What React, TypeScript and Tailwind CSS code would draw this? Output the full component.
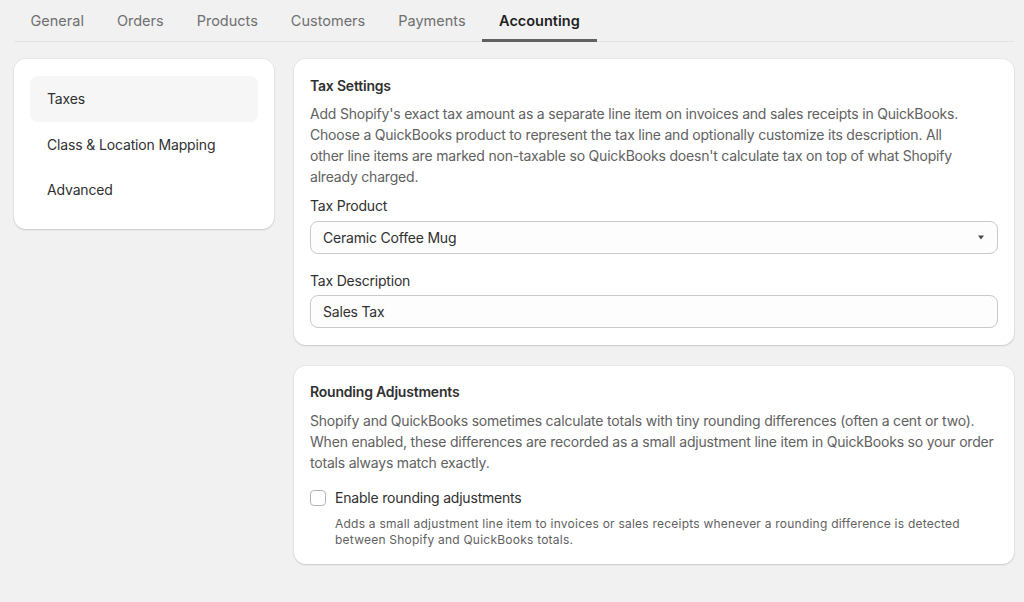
import { useState } from 'react';

const tabs = ['General', 'Orders', 'Products', 'Customers', 'Payments', 'Accounting'];
const sections = ['Taxes', 'Class & Location Mapping', 'Advanced'];

const cardClass =
  'bg-white rounded-xl shadow-[0_1px_2px_rgba(0,0,0,0.14),0_0_0_1px_rgba(0,0,0,0.03)]';

export default function App() {
  const [activeTab, setActiveTab] = useState('Accounting');
  const [activeSection, setActiveSection] = useState('Taxes');
  const [rounding, setRounding] = useState(false);
  const [description, setDescription] = useState('Sales Tax');

  return (
    <div
      className="min-h-[602px] bg-[#f1f1f1] pl-[14px] pr-[10px] text-[#303030]"
      style={{ fontFamily: 'Inter, "Noto Sans", sans-serif' }}
    >
      {/* Tabs */}
      <div className="flex border-b border-[#e3e3e3]">
        {tabs.map((tab) => (
          <button
            key={tab}
            onClick={() => setActiveTab(tab)}
            className={
              tab === activeTab
                ? 'h-[42px] px-[17px] pt-[2px] text-[14.5px] font-semibold text-[#1f1f1f] border-b-[3px] border-[#616161] mb-[-1px]'
                : 'h-[42px] px-[16.5px] pt-[2px] text-[14.5px] text-[#6f6f6f] border-b-[3px] border-transparent mb-[-1px]'
            }
          >
            {tab}
          </button>
        ))}
      </div>

      <div className="flex gap-5 pt-[17px]">
        {/* Section nav */}
        <div className={`${cardClass} w-[260px] shrink-0 self-start p-4 pt-[17px]`}>
          {sections.map((s) => (
            <button
              key={s}
              onClick={() => setActiveSection(s)}
              className={`flex h-[45.5px] w-full items-center rounded-lg px-4 pl-[17px] text-left text-[14px] tracking-[-0.15px] text-[#303030] ${
                s === activeSection ? 'bg-[#f6f6f6]' : ''
              }`}
            >
              {s}
            </button>
          ))}
        </div>

        {/* Settings */}
        <div className="flex min-w-0 flex-1 flex-col gap-[21px] tracking-[-0.2px]">
          <div className={`${cardClass} px-4 pt-[17px] pb-[17px]`}>
            <h3 className="text-[14px] font-semibold leading-5 text-[#303030]">Tax Settings</h3>
            <p className="mt-[7px] pr-6 text-[14px] leading-[21px] text-[#616161]">
              Add Shopify's exact tax amount as a separate line item on invoices and sales receipts in
              QuickBooks. Choose a QuickBooks product to represent the tax line and optionally customize its
              description. All other line items are marked non-taxable so QuickBooks doesn't calculate tax on
              top of what Shopify already charged.
            </p>

            <label className="mt-[9px] block text-[14px] leading-5 text-[#303030]">Tax Product</label>
            <div className="relative mt-[5px]">
              <select className="h-[33px] w-full appearance-none rounded-lg border border-[#c9c9c9] bg-[#fdfdfd] pl-[12px] pr-8 text-[14px] text-[#303030] outline-none">
                <option>Ceramic Coffee Mug</option>
              </select>
              <svg
                className="pointer-events-none absolute right-[14px] top-[14px]"
                width="6"
                height="5"
                viewBox="0 0 6 5"
              >
                <path d="M0 0.5h6L3 4.5z" fill="#4a4a4a" />
              </svg>
            </div>

            <label className="mt-[17px] block text-[14px] leading-5 text-[#303030]">Tax Description</label>
            <input
              value={description}
              onChange={(e) => setDescription(e.target.value)}
              className="mt-[4px] h-[33px] w-full rounded-lg border border-[#c9c9c9] bg-[#fdfdfd] px-[12px] text-[14px] text-[#303030] outline-none"
            />
          </div>

          <div className={`${cardClass} px-4 pt-[16px] pb-[16px]`}>
            <h3 className="text-[14px] font-semibold leading-5 text-[#303030]">Rounding Adjustments</h3>
            <p className="mt-[8px] text-[14px] leading-[21px] text-[#616161]">
              Shopify and QuickBooks sometimes calculate totals with tiny rounding differences (often a cent or
              two). When enabled, these differences are recorded as a small adjustment line item in QuickBooks
              so your order totals always match exactly.
            </p>

            <label className="mt-[15px] flex cursor-pointer items-center gap-[9px]">
              <input
                type="checkbox"
                checked={rounding}
                onChange={(e) => setRounding(e.target.checked)}
                className="h-4 w-4 appearance-none rounded-[4px] border border-[#b5b5b5] bg-white"
              />
              <span className="text-[14px] leading-5 text-[#303030]">Enable rounding adjustments</span>
            </label>
            <p className="mt-[8px] pl-[25px] pr-6 text-[12px] leading-4 tracking-[0.23px] text-[#616161]">
              Adds a small adjustment line item to invoices or sales receipts whenever a rounding difference is
              detected between Shopify and QuickBooks totals.
            </p>
          </div>
        </div>
      </div>
    </div>
  );
}
